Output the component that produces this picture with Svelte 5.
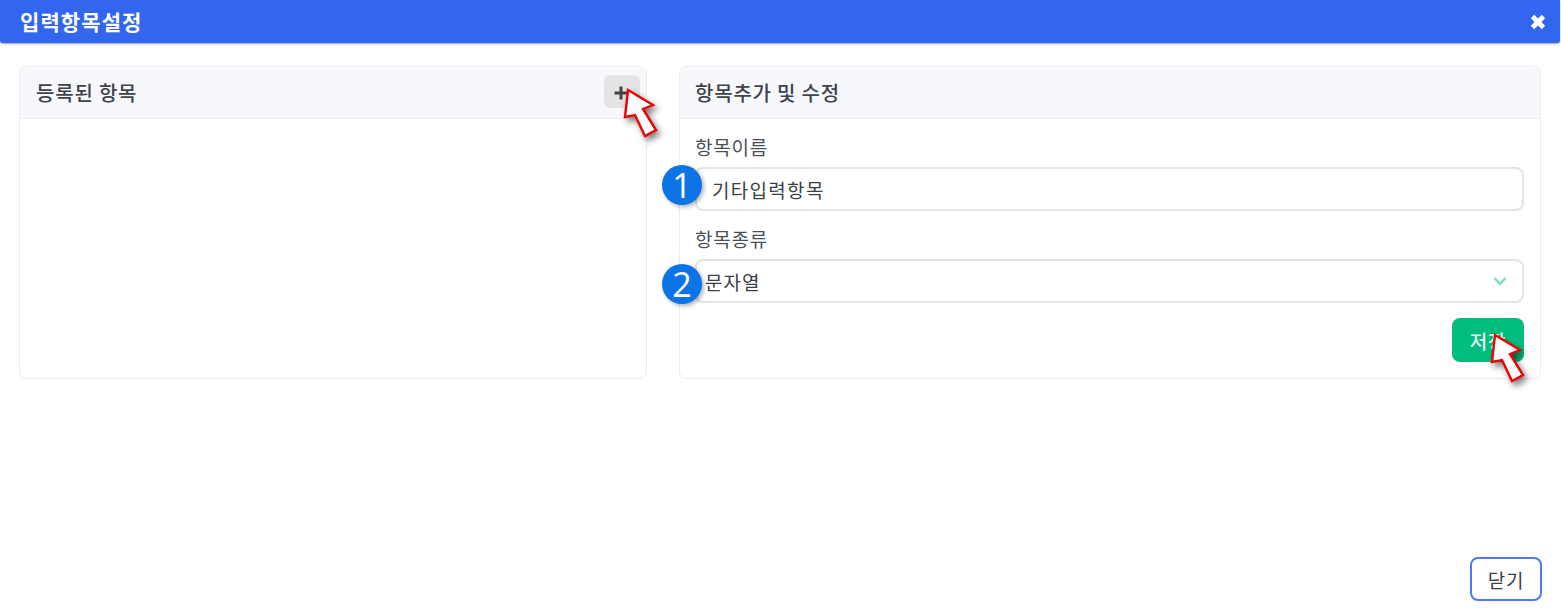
<script>
	// pointer callout, tip of the arrow sits at 3,0 in the viewBox
	const arrowPath = 'M0 0 L25 15 L15 19 L28 40 L17 46 L7 25 L-3 27 Z';
</script>

<div class="modal">
	<header class="modal-head">
		<h1>입력항목설정</h1>
		<svg class="close" viewBox="0 0 16 16" width="16" height="16">
			<path d="M2.5 2.5 L13.5 13.5 M13.5 2.5 L2.5 13.5" />
		</svg>
	</header>

	<main class="modal-body">
		<section class="card left">
			<div class="card-head">
				<h2>등록된 항목</h2>
				<div class="add-wrap">
					<button class="add" aria-label="추가">
						<svg viewBox="0 0 16 16" width="16" height="16"><path d="M8 1.5 V14.5 M1.5 8 H14.5" /></svg>
					</button>
					<svg class="cursor cursor-add" viewBox="-3 0 32 46" width="32" height="46">
						<path d={arrowPath} />
					</svg>
				</div>
			</div>
		</section>

		<section class="card right">
			<div class="card-head">
				<h2>항목추가 및 수정</h2>
			</div>
			<div class="card-body">
				<div class="field">
					<label for="name">항목이름</label>
					<div class="control">
						<span class="badge badge-one">1</span>
						<input id="name" value="기타입력항목" />
					</div>
				</div>
				<div class="field">
					<label for="kind">항목종류</label>
					<div class="control">
						<span class="badge badge-two">2</span>
						<div id="kind" class="select">
							<span>문자열</span>
							<svg viewBox="0 0 14 10" width="14" height="10"><path d="M1.5 2 L7 8 L12.5 2" /></svg>
						</div>
					</div>
				</div>
				<div class="actions">
					<div class="save-wrap">
						<button class="save">저장</button>
						<svg class="cursor cursor-save" viewBox="-3 0 32 46" width="32" height="46">
							<path d={arrowPath} />
						</svg>
					</div>
				</div>
			</div>
		</section>
	</main>

	<footer class="modal-foot">
		<button class="close-btn">닫기</button>
	</footer>
</div>

<style>
	:global(body) {
		margin: 0;
		background: #fff;
	}

	.modal {
		width: 1561px;
		height: 614px;
		display: flex;
		flex-direction: column;
		font-family: "Noto Sans CJK KR", "Noto Sans", sans-serif;
		color: #3a3f47;
		overflow: hidden;
	}

	.modal-head {
		height: 43px;
		flex: none;
		margin-right: 1px;
		padding: 0 14px 0 20px;
		box-sizing: border-box;
		display: flex;
		align-items: center;
		justify-content: space-between;
		background: #3366ee;
		border-radius: 0 0 3px 3px;
		box-shadow: 0 1px 2px rgba(30, 50, 110, 0.45);
	}

	.modal-head h1 {
		margin: 0 0 1px;
		font-size: 21px;
		font-weight: 700;
		letter-spacing: 1.1px;
		color: #fff;
	}

	.close path {
		stroke: #fff;
		stroke-width: 4.8;
		fill: none;
	}

	.modal-body {
		flex: 1;
		display: flex;
		gap: 32px;
		align-items: flex-start;
		padding: 23px 20px 0 19px;
	}

	.card {
		height: 313px;
		box-sizing: border-box;
		border: 1px solid #ececef;
		border-radius: 7px;
		background: #fff;
	}

	.left {
		width: 628px;
	}

	.right {
		width: 862px;
	}

	.card-head {
		height: 52px;
		box-sizing: border-box;
		padding: 0 6px 0 16px;
		display: flex;
		align-items: center;
		justify-content: space-between;
		background: #f7f8fc;
		border-bottom: 1px solid #ececef;
		border-radius: 7px 7px 0 0;
	}

	.card-head h2 {
		margin: 0 0 1px;
		font-size: 20px;
		font-weight: 500;
		letter-spacing: 0.8px;
		color: #3f434a;
	}

	.right .card-head {
		padding-left: 15px;
	}

	.add-wrap,
	.save-wrap {
		position: relative;
	}

	.add {
		display: flex;
		align-items: center;
		justify-content: center;
		width: 36px;
		height: 33px;
		padding: 0;
		border: none;
		border-radius: 6px;
		background: #e4e4e4;
	}

	.add svg {
		margin: 2px 2px 0 0;
	}

	.add path {
		stroke: #45453f;
		stroke-width: 3;
		fill: none;
	}

	.add-wrap {
		margin-top: -2px;
	}

	.cursor {
		position: absolute;
		overflow: visible;
		filter: drop-shadow(3px 4px 3px rgba(0, 0, 0, 0.5));
	}

	.cursor path {
		fill: #fff;
		stroke: #f00000;
		stroke-width: 2.4;
		stroke-linejoin: miter;
	}

	.cursor-add {
		left: 21px;
		top: 15px;
	}

	.cursor-save {
		left: 40px;
		top: 17px;
	}

	.card-body {
		padding: 16px 16px 0 15px;
	}

	.field {
		margin-bottom: 16px;
	}

	.field label {
		display: block;
		height: 24px;
		margin-bottom: 8px;
		font-size: 19px;
		line-height: 24px;
		letter-spacing: 0.8px;
		color: #4a4f57;
	}

	.control {
		position: relative;
	}

	.control input,
	.select {
		width: 100%;
		height: 44px;
		box-sizing: border-box;
		border: 2px solid #e3e4e6;
		border-radius: 8px;
		background: #fff;
		font-family: inherit;
		font-size: 19px;
		letter-spacing: 1.3px;
		color: #3a3f47;
		outline: none;
	}

	.control input {
		padding: 0 15px;
	}

	.select {
		display: flex;
		align-items: center;
		justify-content: space-between;
		padding: 0 15px 0 8px;
		letter-spacing: 1px;
	}

	.select path {
		stroke: #7fdcbc;
		stroke-width: 2.4;
		fill: none;
	}

	.badge {
		position: absolute;
		left: -33px;
		width: 40px;
		height: 40px;
		display: flex;
		align-items: center;
		justify-content: center;
		border-radius: 50%;
		background: #0c74e4;
		box-shadow: 2px 2px 4px rgba(0, 0, 0, 0.3);
		font-family: "Open Sans", sans-serif;
		font-size: 34px;
		font-weight: 500;
		color: #fff;
		z-index: 1;
	}

	.badge-one {
		top: -2px;
	}

	.badge-two {
		top: 5px;
	}

	.actions {
		display: flex;
		justify-content: flex-end;
		margin-top: -1px;
	}

	.save {
		display: block;
		width: 72px;
		height: 44px;
		padding: 0;
		border: none;
		border-radius: 8px;
		background: #00bd7e;
		font-family: inherit;
		font-size: 19px;
		font-weight: 500;
		letter-spacing: 0.8px;
		color: #e8fff5;
	}

	.modal-foot {
		display: flex;
		justify-content: flex-end;
		padding: 0 19px 13px 0;
	}

	.close-btn {
		width: 72px;
		height: 44px;
		padding: 0;
		box-sizing: border-box;
		border: 2px solid #4f7bef;
		border-radius: 8px;
		background: #fff;
		font-family: inherit;
		font-size: 19px;
		letter-spacing: 0.8px;
		color: #3a3f47;
	}
</style>
